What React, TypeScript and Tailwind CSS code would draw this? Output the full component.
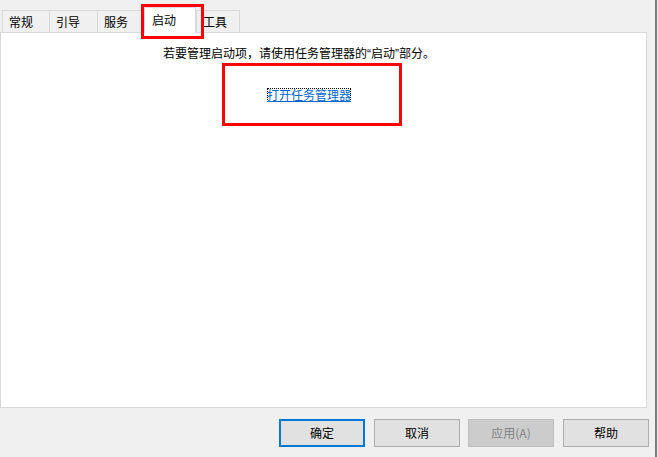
import React from "react";

const Tab = ({ label, w, last }: { label: string; w: string; last?: boolean }) => (
  <div
    className={`${w} h-[22px] border-t border-l border-[#d9d9d9] ${last ? "border-r" : ""} bg-[#f0f0f0] flex items-center pl-[6px] box-border`}
  >
    {label}
  </div>
);

const Btn = ({ label, primary, disabled, ml }: { label: string; primary?: boolean; disabled?: boolean; ml?: string }) => {
  let cls = "border border-[#adadad] bg-[#e1e1e1] text-black";
  if (primary) cls = "border-2 border-[#0078d7] bg-[#e1e1e1] text-black";
  if (disabled) cls = "border border-[#bfbfbf] bg-[#cccccc] text-[#838383]";
  return (
    <div className={`${ml ?? ""} w-[86px] h-[28px] box-border flex items-center justify-center ${cls}`}>{label}</div>
  );
};

export default function App() {
  return (
    <div className="relative w-[658px] h-[457px] bg-[#f0f0f0] flex overflow-hidden font-['Noto_Sans_CJK_SC','Noto_Sans',sans-serif] text-[12px] leading-[16px] text-black">
      <div className="w-[655px] flex flex-col">
        <div className="h-[32px] flex items-end pl-[2px]">
          <Tab label="常规" w="w-[47px]" />
          <Tab label="引导" w="w-[48px]" />
          <Tab label="服务" w="w-[47px]" />
          <div className="relative z-10 w-[52px] h-[26px] -mb-[1px] border-t border-l border-r border-[#d9d9d9] bg-white flex items-center pl-[7px] pb-[2px] box-border">
            启动
          </div>
          <Tab label="工具" w="w-[44px]" last />
        </div>
        <div className="w-[647px] h-[376px] border border-[#d9d9d9] bg-white box-border flex flex-col">
          <div className="mt-[12px] pl-[162px] whitespace-nowrap">
            若要管理启动项，请使用任务管理器的<span className="font-['Liberation_Sans',sans-serif]">“</span>启动<span className="font-['Liberation_Sans',sans-serif]">”</span>部分。
          </div>
          <div className="mt-[26px] pl-[266px] flex">
            <span className="h-[14px] w-[84px] border border-dotted border-black box-border flex items-center justify-center leading-[12px] text-[#0066cc] underline whitespace-nowrap">
              打开任务管理器
            </span>
          </div>
        </div>
        <div className="mt-[11px] flex pl-[279px]">
          <Btn label="确定" primary />
          <Btn label="取消" ml="ml-[9px]" />
          <Btn label="应用(A)" disabled ml="ml-[8px]" />
          <Btn label="帮助" ml="ml-[9px]" />
        </div>
      </div>
      <div className="w-[2px] h-full bg-[#7a7a7a]" />
      <div className="absolute left-[141px] top-[4px] w-[63px] h-[35px] border-[3px] border-[#ff0000] z-20" />
      <div className="absolute left-[222px] top-[63px] w-[180px] h-[63px] border-[3px] border-[#ff0000] z-20" />
    </div>
  );
}
